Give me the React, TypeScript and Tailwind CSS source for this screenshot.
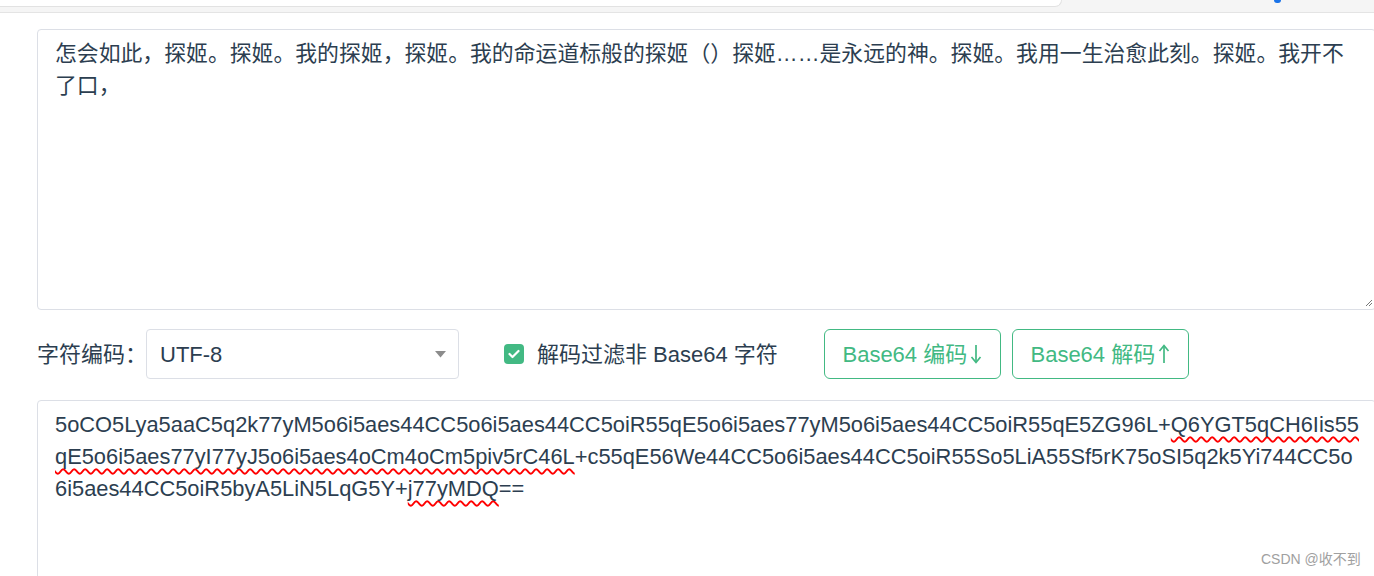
import React from "react";

const FONT = "font-['Liberation_Sans','Noto_Sans_CJK_SC',sans-serif]";

function Arrow({ up }: { up?: boolean }) {
  return (
    <svg width="12" height="20" viewBox="0 0 12 20" className="ml-[3px]" aria-hidden="true">
      {up ? (
        <>
          <line x1="6" y1="2" x2="6" y2="19" stroke="#42b983" strokeWidth="1.7" />
          <path d="M1.5 7 L6 1.5 L10.5 7" stroke="#42b983" strokeWidth="1.7" fill="none" />
        </>
      ) : (
        <>
          <line x1="6" y1="1" x2="6" y2="18" stroke="#42b983" strokeWidth="1.7" />
          <path d="M1.5 13 L6 18.5 L10.5 13" stroke="#42b983" strokeWidth="1.7" fill="none" />
        </>
      )}
    </svg>
  );
}

const WAVY =
  "underline decoration-wavy decoration-[#ff0000] decoration-[1.5px] underline-offset-[4px] [text-decoration-skip-ink:none]";

export default function App() {
  return (
    <div className={`w-[1374px] h-[576px] overflow-hidden bg-white relative ${FONT} text-[#2c3e50]`}>
      {/* top strip */}
      <div className="h-[13px] bg-[#f5f5f5] border-b border-[#e4e4e4] relative">
        <div className="w-[1062px] h-[7px] bg-white border-b border-r border-[#e2e2e2] rounded-br-[9px]" />
        <div className="absolute left-[1274px] top-[-3px] w-[7px] h-[6px] rounded-full bg-[#1a73e8]" />
      </div>

      <div className="pl-[37px] pt-[16px]">
        {/* source textarea */}
        <div className="relative w-[1339px] h-[281px] border border-[#dcdfe6] rounded-[4px] pl-[17px] pt-[8px] text-[21.85px] leading-[32px]">
          <div className="whitespace-nowrap">怎会如此，探姬。探姬。我的探姬，探姬。我的命运道标般的探姬（）探姬……是永远的神。探姬。我用一生治愈此刻。探姬。我开不</div>
          <div className="whitespace-nowrap">了口，</div>
          <svg className="absolute right-[2px] bottom-[2px]" width="8" height="8" viewBox="0 0 8 8">
            <line x1="7" y1="1" x2="1" y2="7" stroke="#777" strokeWidth="1" />
            <line x1="7" y1="4" x2="4" y2="7" stroke="#777" strokeWidth="1" />
          </svg>
        </div>

        {/* controls row */}
        <div className="flex items-center h-[50px] mt-[19px]">
          <span className="text-[22px] text-[#2c3e50] w-[109px] whitespace-nowrap">字符编码：</span>
          <div className="w-[313px] h-[50px] border border-[#dcdfe6] rounded-[4px] flex items-center justify-between pl-[13px] pr-[12px]">
            <span className="text-[22px] text-[#2c3e50]">UTF-8</span>
            <svg width="11" height="7" viewBox="0 0 11 7">
              <path d="M0 0 L11 0 L5.5 6.5 Z" fill="#8c8c8c" />
            </svg>
          </div>
          <div className="flex items-center ml-[45px]">
            <div className="w-[20px] h-[20px] rounded-[4px] bg-[#42b983] flex items-center justify-center">
              <svg width="12" height="10" viewBox="0 0 12 10">
                <path d="M1.5 5 L4.5 8 L10.5 2" stroke="#fff" strokeWidth="2.2" fill="none" strokeLinecap="round" strokeLinejoin="round" />
              </svg>
            </div>
            <span className="ml-[13px] text-[22px] whitespace-nowrap">解码过滤非 Base64 字符</span>
          </div>
          <button className="ml-[46px] w-[177px] h-[50px] border border-[#42b983] rounded-[6px] text-[#42b983] text-[22px] flex items-center justify-center whitespace-nowrap">
            <span>Base64 编码</span>
            <Arrow />
          </button>
          <button className="ml-[11px] w-[177px] h-[50px] border border-[#42b983] rounded-[6px] text-[#42b983] text-[22px] flex items-center justify-center whitespace-nowrap">
            <span>Base64 解码</span>
            <Arrow up />
          </button>
        </div>

        {/* result textarea */}
        <div className="w-[1339px] h-[260px] mt-[21px] border border-[#dcdfe6] rounded-[4px] pl-[17px] pt-[8px] text-[21.85px] leading-[32px]">
          <div className="whitespace-nowrap">
            5oCO5Lya5aaC5q2k77yM5o6i5aes44CC5o6i5aes44CC5oiR55qE5o6i5aes77yM5o6i5aes44CC5oiR55qE5ZG96L+
            <span className={WAVY}>Q6YGT5qCH6Iis55</span>
          </div>
          <div className="whitespace-nowrap">
            <span className={WAVY}>qE5o6i5aes77yI77yJ5o6i5aes4oCm4oCm5piv5rC46L</span>
            +c55qE56We44CC5o6i5aes44CC5oiR55So5LiA55Sf5rK75oSI5q2k5Yi744CC5o
          </div>
          <div className="whitespace-nowrap">
            6i5aes44CC5oiR5byA5LiN5LqG5Y+
            <span className={WAVY}>j77yMDQ</span>
            ==
          </div>
        </div>
      </div>

      <div className="absolute left-[1261px] top-[549px] text-[14px] text-[#a0a0a0] whitespace-nowrap">CSDN @收不到</div>
    </div>
  );
}
